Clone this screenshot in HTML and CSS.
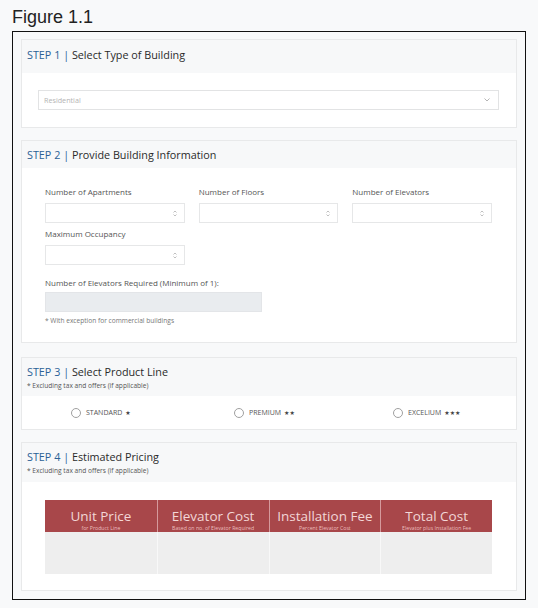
FILE: index.html
```html
<!DOCTYPE html>
<html lang="en">
<head>
<meta charset="utf-8">
<title>Figure 1.1</title>
<link rel="stylesheet" href="styles.css">
</head>
<body>
<div class="caption">Figure 1.1</div>
<div class="frame">
  <section class="card card-1">
    <header class="card-head head-1">
      <h2 class="step-title"><span class="step">STEP 1 |</span> Select Type of Building</h2>
    </header>
    <div class="card-body body-1">
      <div class="select">
        <span class="placeholder">Residential</span>
        <svg class="chev" width="6" height="4" viewBox="0 0 6 4"><path d="M0.5 0.5 L3 3 L5.5 0.5" fill="none" stroke="#b5b5b5" stroke-width="1"/></svg>
      </div>
    </div>
  </section>

  <section class="card card-2">
    <header class="card-head head-2">
      <h2 class="step-title"><span class="step">STEP 2 |</span> Provide Building Information</h2>
    </header>
    <div class="card-body body-2">
      <div class="fields">
        <div class="field">
          <label class="lbl">Number of Apartments</label>
          <div class="num"><svg class="spin" width="4" height="7" viewBox="0 0 4 7"><path d="M0.5 2.5 L2 1 L3.5 2.5 M0.5 4.5 L2 6 L3.5 4.5" fill="none" stroke="#b0b0b0" stroke-width="0.8"/></svg></div>
        </div>
        <div class="field">
          <label class="lbl">Number of Floors</label>
          <div class="num"><svg class="spin" width="4" height="7" viewBox="0 0 4 7"><path d="M0.5 2.5 L2 1 L3.5 2.5 M0.5 4.5 L2 6 L3.5 4.5" fill="none" stroke="#b0b0b0" stroke-width="0.8"/></svg></div>
        </div>
        <div class="field">
          <label class="lbl">Number of Elevators</label>
          <div class="num"><svg class="spin" width="4" height="7" viewBox="0 0 4 7"><path d="M0.5 2.5 L2 1 L3.5 2.5 M0.5 4.5 L2 6 L3.5 4.5" fill="none" stroke="#b0b0b0" stroke-width="0.8"/></svg></div>
        </div>
        <div class="field">
          <label class="lbl">Maximum Occupancy</label>
          <div class="num"><svg class="spin" width="4" height="7" viewBox="0 0 4 7"><path d="M0.5 2.5 L2 1 L3.5 2.5 M0.5 4.5 L2 6 L3.5 4.5" fill="none" stroke="#b0b0b0" stroke-width="0.8"/></svg></div>
        </div>
      </div>
      <label class="lbl lbl-req">Number of Elevators Required (Minimum of 1):</label>
      <div class="readonly"></div>
      <p class="note">* With exception for commercial buildings</p>
    </div>
  </section>

  <section class="card card-3">
    <header class="card-head head-3">
      <h2 class="step-title"><span class="step">STEP 3 |</span> Select Product Line</h2>
      <p class="sub">* Excluding tax and offers (if applicable)</p>
    </header>
    <div class="card-body body-3">
      <label class="radio"><span class="circle"></span>STANDARD <span class="stars">★</span></label>
      <label class="radio"><span class="circle"></span>PREMIUM <span class="stars">★★</span></label>
      <label class="radio"><span class="circle"></span>EXCELIUM <span class="stars">★★★</span></label>
    </div>
  </section>

  <section class="card card-4">
    <header class="card-head head-4">
      <h2 class="step-title"><span class="step">STEP 4 |</span> Estimated Pricing</h2>
      <p class="sub">* Excluding tax and offers (if applicable)</p>
    </header>
    <div class="card-body body-4">
      <div class="price-table">
        <div class="th"><div class="th-main">Unit Price</div><div class="th-sub">for Product Line</div></div>
        <div class="th"><div class="th-main">Elevator Cost</div><div class="th-sub">Based on no. of Elevator Required</div></div>
        <div class="th"><div class="th-main">Installation Fee</div><div class="th-sub">Percent Elevator Cost</div></div>
        <div class="th"><div class="th-main">Total Cost</div><div class="th-sub">Elevator plus Installation Fee</div></div>
        <div class="td"></div>
        <div class="td"></div>
        <div class="td"></div>
        <div class="td"></div>
      </div>
    </div>
  </section>
</div>
</body>
</html>
```

FILE: styles.css
```css
* { box-sizing: border-box; }

html, body {
  margin: 0;
  padding: 0;
  background: #f8f9fa;
}

body {
  font-family: "Open Sans", "Noto Sans", sans-serif;
  color: #212529;
}

.caption {
  font-family: "Liberation Sans", Arial, sans-serif;
  font-size: 18px;
  line-height: 21px;
  color: #222;
  padding: 7px 0 0 12px;
  height: 31px;
}

.frame {
  margin-left: 12px;
  width: 514px;
  height: 569px;
  border: 1px solid #111;
  padding: 7px 8px 7px 8px;
  display: flex;
  flex-direction: column;
}

.card {
  background: #fff;
  border: 1px solid #e8e9ea;
}

.card-2 { margin-top: 12px; }
.card-3 { margin-top: 14px; }
.card-4 { margin-top: 12px; }

.card-head {
  background: #f7f8f9;
  padding: 0 5px;
}

.head-1 { height: 33px; padding-top: 7px; }
.head-2 { height: 27px; padding-top: 6px; }
.head-3 { height: 38px; padding-top: 6px; }
.head-4 { height: 39px; padding-top: 6px; }

.step-title {
  margin: 0;
  font-size: 10.8px;
  line-height: 15px;
  font-weight: 400;
  color: #2a2a2a;
}

.step { color: #2a6196; }

.sub {
  margin: 3px 0 0;
  font-size: 6.6px;
  line-height: 8px;
  color: #555;
}

/* step 1 */
.body-1 { padding: 17px 17px 17px 16px; }

.select {
  height: 20px;
  border: 1px solid #e2e3e4;
  background: #fff;
  display: flex;
  align-items: center;
  justify-content: space-between;
  padding: 0 8px 0 5px;
}

.placeholder {
  font-size: 7.2px;
  color: #b4b4b4;
}

.chev { display: block; }

/* step 2 */
.body-2 { padding: 19px 24px 17px 23px; }

.fields {
  display: grid;
  grid-template-columns: 1fr 1fr 1fr;
  column-gap: 14px;
  row-gap: 6px;
}

.lbl {
  display: block;
  font-size: 8px;
  line-height: 10px;
  color: #555;
}

.field .lbl { margin-bottom: 6px; }

.num {
  height: 20px;
  border: 1px solid #e6e7e8;
  background: #fff;
  display: flex;
  align-items: center;
  justify-content: flex-end;
  padding-right: 7px;
}

.spin { display: block; }

.lbl-req { margin-top: 13px; }

.readonly {
  margin-top: 4px;
  width: 217px;
  height: 20px;
  background: #e9ecef;
  border: 1px solid #e3e5e8;
}

.note {
  margin: 5px 0 0;
  font-size: 6.6px;
  line-height: 8px;
  color: #777;
}

/* step 3 */
.body-3 {
  height: 33px;
  display: grid;
  grid-template-columns: 163px 159px 1fr;
  align-items: center;
  padding-left: 49px;
}

.radio {
  display: flex;
  align-items: center;
  font-size: 7px;
  color: #555;
}

.circle {
  width: 10px;
  height: 10px;
  border: 1px solid #a0a0a0;
  border-radius: 50%;
  margin-right: 5px;
  background: #fff;
}

.stars {
  margin-left: 3px;
  font-size: 6px;
  color: #444;
  font-family: "DejaVu Sans", sans-serif;
}

/* step 4 */
.body-4 { padding: 18px 24px 16px 23px; }

.price-table {
  display: grid;
  grid-template-columns: repeat(4, 1fr);
  grid-template-rows: 32px 42px;
}

.th {
  background: #a8474a;
  color: rgba(255, 236, 236, 0.88);
  text-align: center;
  border-left: 1px solid #d59a9c;
  padding-top: 8px;
}

.th:first-child { border-left: none; }

.th-main {
  font-size: 13.5px;
  line-height: 17px;
  font-weight: 400;
}

.th-sub {
  font-size: 5.2px;
  line-height: 6px;
  color: rgba(255, 220, 220, 0.8);
}

.td {
  background: #eeeeee;
  border-left: 1px solid #f8f8f8;
}

.td:nth-child(5) { border-left: none; }
```
